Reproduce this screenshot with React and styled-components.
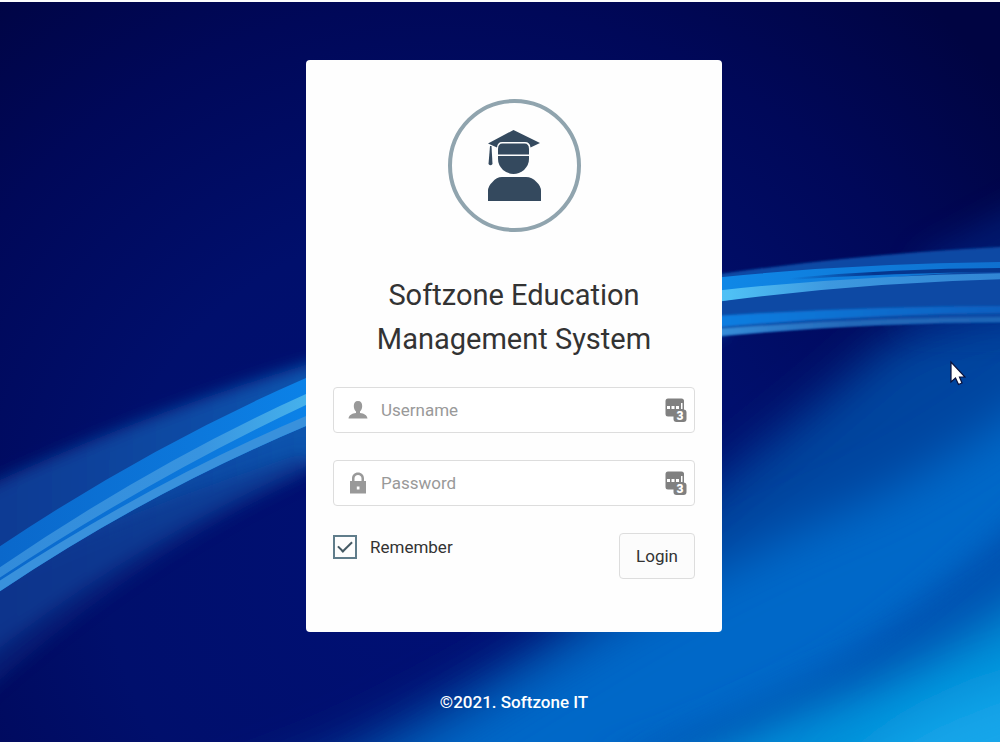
import { useState } from "react";
import styled, { createGlobalStyle } from "styled-components";

const GlobalStyle = createGlobalStyle`
  * {
    box-sizing: border-box;
  }

  body {
    margin: 0;
    background: #fcfdfe;
    font-family: Roboto, sans-serif;
    color: #333;
  }
`;

function Waves() {
  return (
    <WavesSvg viewBox="0 2 1000 740" preserveAspectRatio="none" aria-hidden="true">
      <defs>
        <radialGradient id="night" gradientUnits="userSpaceOnUse" cx="440" cy="560" r="740">
          <stop offset="0" stopColor="#001075" />
          <stop offset="0.45" stopColor="#000f6c" />
          <stop offset="0.75" stopColor="#000859" />
          <stop offset="1" stopColor="#000442" />
        </radialGradient>
        <linearGradient id="glow" gradientUnits="userSpaceOnUse" x1="0" y1="0" x2="1000" y2="0">
          <stop offset="0" stopColor="#0a3a93" />
          <stop offset="0.3" stopColor="#0d54ae" />
          <stop offset="0.72" stopColor="#0a55b4" />
          <stop offset="1" stopColor="#0a4398" />
        </linearGradient>
        <linearGradient id="band" gradientUnits="userSpaceOnUse" x1="0" y1="0" x2="1000" y2="0">
          <stop offset="0" stopColor="#0a68cb" />
          <stop offset="0.2" stopColor="#0c78dc" />
          <stop offset="0.31" stopColor="#0b82e8" />
          <stop offset="0.73" stopColor="#0f87e6" />
          <stop offset="1" stopColor="#0f70cf" />
        </linearGradient>
        <linearGradient id="shine" gradientUnits="userSpaceOnUse" x1="0" y1="0" x2="1000" y2="0">
          <stop offset="0" stopColor="#328bda" />
          <stop offset="0.2" stopColor="#3894e0" />
          <stop offset="0.31" stopColor="#46b2ec" />
          <stop offset="0.73" stopColor="#4fc0f5" />
          <stop offset="0.83" stopColor="#3d98df" />
          <stop offset="1" stopColor="#3185d4" />
        </linearGradient>
        <linearGradient id="lowerBand" gradientUnits="userSpaceOnUse" x1="700" y1="0" x2="1000" y2="0">
          <stop offset="0" stopColor="#0d80e4" />
          <stop offset="0.5" stopColor="#0e70d0" />
          <stop offset="1" stopColor="#0a5fc0" />
        </linearGradient>
        <linearGradient id="lowerShine" gradientUnits="userSpaceOnUse" x1="700" y1="0" x2="1000" y2="0">
          <stop offset="0" stopColor="#3a93de" />
          <stop offset="0.5" stopColor="#2368b8" />
          <stop offset="1" stopColor="#1f66b8" />
        </linearGradient>
        <linearGradient id="seam" gradientUnits="userSpaceOnUse" x1="790" y1="0" x2="1000" y2="0">
          <stop offset="0" stopColor="#05368e" stopOpacity="0" />
          <stop offset="0.4" stopColor="#05368e" />
          <stop offset="1" stopColor="#05368e" />
        </linearGradient>
        <filter id="soft1" x="-10%" y="-20%" width="120%" height="140%">
          <feGaussianBlur stdDeviation="1" />
        </filter>
        <filter id="soft8" x="-20%" y="-30%" width="140%" height="160%">
          <feGaussianBlur stdDeviation="8" />
        </filter>
        <filter id="soft16" x="-20%" y="-30%" width="140%" height="160%">
          <feGaussianBlur stdDeviation="15" />
        </filter>
        <filter id="soft28" x="-30%" y="-30%" width="160%" height="160%">
          <feGaussianBlur stdDeviation="25" />
        </filter>
      </defs>

      <rect y="2" width="1000" height="740" fill="url(#night)" />

      <path d="M80 850L330 755Q460 695 560 630Q670 520 740 465Q830 395 890 340Q980 300 1100 290V850Z" fill="#03459f" filter="url(#soft28)" />
      <path d="M260 850Q420 745 560 660Q720 560 870 500Q970 450 1100 350V850Z" fill="#0468c8" filter="url(#soft28)" />
      <path d="M920 255Q980 225 1060 180V330H900Z" fill="#00339a" opacity="0.4" filter="url(#soft16)" />
      <path d="M600 765Q760 710 860 645Q940 590 1080 465V640Q900 700 760 750Z" fill="#0351b0" filter="url(#soft16)" />
      <path d="M620 820Q700 745 860 690Q960 650 1100 550V850H620Z" fill="#048fd8" filter="url(#soft28)" />
      <path d="M820 810Q880 710 1060 670V850Z" fill="#13a6ea" filter="url(#soft28)" />

      {/* haze around the left arc */}
      <path
        d="M-60 508Q120 421 306 365Q510 302 723 283V334Q500 384 306 466Q110 552 -60 696Z"
        fill="url(#glow)"
        filter="url(#soft8)"
      />
      <path d="M-60 600Q100 520 306 452V476Q110 570 -60 735Z" fill="#0a2f85" opacity="0.5" filter="url(#soft8)" />
      <path d="M700 277Q850 254 1020 246V322Q850 322 700 338Z" fill="#0a48a4" filter="url(#soft1)" />

      {/* upper strand */}
      <path d="M-10 553Q145 448 306 378Q500 304 723 277Q860 263 1010 262V271Q860 274 723 301Q500 340 306 426Q140 496 -10 598Z" fill="url(#band)" />
      <path d="M-10 574Q150 464 306 394Q510 312 723 290Q860 275 1010 273V279Q870 282 723 301Q510 330 306 405Q150 478 -10 584Z" fill="url(#shine)" />
      <path d="M-10 587Q150 482 306 416V426Q140 496 -10 598Z" fill="#3991dc" />
      <path d="M790 278Q900 268 1010 268V272Q900 272 790 280Z" fill="url(#seam)" />

      {/* lower strand */}
      <path d="M700 317Q860 306 1010 306V313Q860 314 700 329Z" fill="url(#lowerBand)" filter="url(#soft1)" />
      <path d="M700 330Q860 317 1010 317V322Q860 322 700 338Z" fill="url(#lowerShine)" filter="url(#soft1)" />
    </WavesSvg>
  );
}

function GraduateIcon() {
  return (
    <svg width="54" height="72" viewBox="0 0 54 72" fill="#34495e" aria-hidden="true">
      <path d="M26.500 0L53 13L43.500 17.500Q43 12 38 12H15Q10.500 12 10 17.500L1 13.500Z" />
      <path d="M3 16H4.500L5.500 34Q3.500 36.500 1.500 34Z" />
      <path d="M15.500 13.500H37.500Q42 13.500 42 19V24.500H11V19Q11 13.500 15.500 13.500Z" />
      <path d="M11 26H42V29Q42 35 37 40Q32 44 26.500 44Q21 44 16 40Q11 35 11 29Z" />
      <path d="M15 47H39Q45 47 49.500 52Q54 56 54 61V71H1V61Q1 56 5.500 52Q9.500 47 15 47Z" />
    </svg>
  );
}

function UserIcon() {
  return (
    <svg width="20" height="20" viewBox="0 0 20 20" fill="#999" aria-hidden="true">
      <path d="M10 1C13 1 14.200 3 14.200 6C14.200 8.500 13.300 10.500 12 11.500V13C16 13.500 19 15 19.500 18.500H0.500C1 15 4 13.500 8 13V11.500C6.700 10.500 5.800 8.500 5.800 6C5.800 3 7 1 10 1Z" />
    </svg>
  );
}

function LockIcon() {
  return (
    <svg width="20" height="22" viewBox="0 0 20 22" fill="#999" aria-hidden="true">
      <path
        fillRule="evenodd"
        d="M4 9V6.500C4 3 6.500 0.500 10 0.500S16 3 16 6.500V9H18V21.500H2V9ZM6.500 9H13.500V6.500C13.500 4.500 12 3 10 3S6.500 4.500 6.500 6.500ZM8.800 14.500V17.500H11.500V14.500Z"
      />
    </svg>
  );
}

function KeyPadIcon() {
  return (
    <svg width="22" height="24" viewBox="0 0 22 24" aria-hidden="true">
      <rect x="0.500" y="0.500" width="18.500" height="18" rx="2.500" fill="#808080" />
      <g fill="#fff">
        <rect x="2" y="8" width="3" height="3" />
        <rect x="6.500" y="8" width="3" height="3" />
        <rect x="11" y="8" width="3" height="3" />
        <rect x="16" y="5" width="1.500" height="6" />
      </g>
      <rect x="8.500" y="11.500" width="13" height="12.500" rx="3" fill="#808080" />
      <text x="15" y="22" textAnchor="middle" fontSize="12" fontWeight="900" fill="#fff">
        3
      </text>
    </svg>
  );
}

function Field({ id, label, icon, type = "text", value, onChange }) {
  return (
    <FieldBox>
      <FieldIcon htmlFor={id} aria-label={label}>
        {icon}
      </FieldIcon>
      <Input
        id={id}
        type={type}
        placeholder={label}
        value={value}
        onChange={(e) => onChange(e.target.value)}
      />
      <KeyPadIcon />
    </FieldBox>
  );
}

export default function App() {
  const [username, setUsername] = useState("");
  const [password, setPassword] = useState("");
  const [remember, setRemember] = useState(true);

  return (
    <Page>
      <GlobalStyle />
      <Scene>
        <Waves />
        <Card onSubmit={(e) => e.preventDefault()}>
          <Avatar>
            <GraduateIcon />
          </Avatar>
          <Title>Softzone Education Management System</Title>
          <Fields>
            <Field id="username" label="Username" icon={<UserIcon />} value={username} onChange={setUsername} />
            <Field
              id="password"
              type="password"
              label="Password"
              icon={<LockIcon />}
              value={password}
              onChange={setPassword}
            />
          </Fields>
          <Actions>
            <Remember>
              <Checkbox type="checkbox" checked={remember} onChange={(e) => setRemember(e.target.checked)} />
              Remember
            </Remember>
            <LoginButton type="submit">Login</LoginButton>
          </Actions>
        </Card>
        <Footer>©2021. Softzone IT</Footer>
        <Pointer width="16" height="26" viewBox="0 0 16 26" aria-hidden="true">
          <path
            d="M1 2V22L5.500 18L8.500 24.500L12 23L9.500 17H15Z"
            fill="#fff"
            stroke="#08103c"
            strokeWidth="1.200"
          />
        </Pointer>
      </Scene>
    </Page>
  );
}

const Page = styled.div`
  display: flex;
  min-height: 100vh;
  padding: 2px 0 8px;
`;

const Scene = styled.main`
  position: relative;
  flex: 1;
  display: flex;
  flex-direction: column;
  align-items: center;
  padding: 58px 0 28px 28px;
  overflow: hidden;
`;

const WavesSvg = styled.svg`
  position: absolute;
  inset: 0;
  width: 100%;
  height: 100%;
`;

const Card = styled.form`
  position: relative;
  display: flex;
  flex-direction: column;
  width: 100%;
  max-width: 416px;
  padding: 39px 27px 53px;
  border-radius: 4px;
  background: #fefefe;
`;

const Avatar = styled.div`
  display: flex;
  align-items: center;
  justify-content: center;
  align-self: center;
  width: 133px;
  height: 133px;
  border: 4px solid #90a4ae;
  border-radius: 50%;
`;

const Title = styled.h1`
  margin: 41px 16px 26px;
  font-size: 29px;
  font-weight: 400;
  line-height: 44px;
  text-align: center;
`;

const Fields = styled.div`
  display: grid;
  gap: 27px;
`;

const FieldBox = styled.div`
  display: flex;
  align-items: center;
  height: 46px;
  padding: 0 7px 0 14px;
  border: 1px solid #ddd;
  border-radius: 4px;
  background: #fff;
`;

const FieldIcon = styled.label`
  display: flex;
  justify-content: center;
  width: 20px;
`;

const Input = styled.input`
  flex: 1;
  min-width: 0;
  padding: 0 13px;
  border: 0;
  outline: none;
  background: none;
  font: inherit;
  font-size: 17px;
  color: #333;

  &::placeholder {
    color: #999;
    opacity: 1;
  }
`;

const Actions = styled.div`
  display: flex;
  align-items: flex-start;
  justify-content: space-between;
  margin-top: 27px;
`;

const Remember = styled.label`
  display: flex;
  align-items: center;
  gap: 13px;
  height: 27px;
  font-size: 17px;
  cursor: pointer;
`;

const Checkbox = styled.input`
  appearance: none;
  display: grid;
  place-items: center;
  width: 24px;
  height: 24px;
  margin: 0;
  border: 2px solid #607d8b;
  cursor: pointer;

  &:checked::after {
    content: "";
    width: 12px;
    height: 6px;
    border: solid #455a64;
    border-width: 0 0 2px 2px;
    transform: translateY(-2px) rotate(-45deg);
  }
`;

const LoginButton = styled.button`
  height: 46px;
  padding: 0 16px;
  border: 1px solid #ddd;
  border-radius: 4px;
  background: #fcfcfc;
  font: inherit;
  font-size: 17px;
  color: #333;
  cursor: pointer;
`;

const Footer = styled.footer`
  position: relative;
  margin-top: auto;
  font-size: 17px;
  font-weight: 500;
  line-height: 24px;
  color: #fff;
`;

const Pointer = styled.svg`
  position: absolute;
  top: 358px;
  left: 95%;
`;
